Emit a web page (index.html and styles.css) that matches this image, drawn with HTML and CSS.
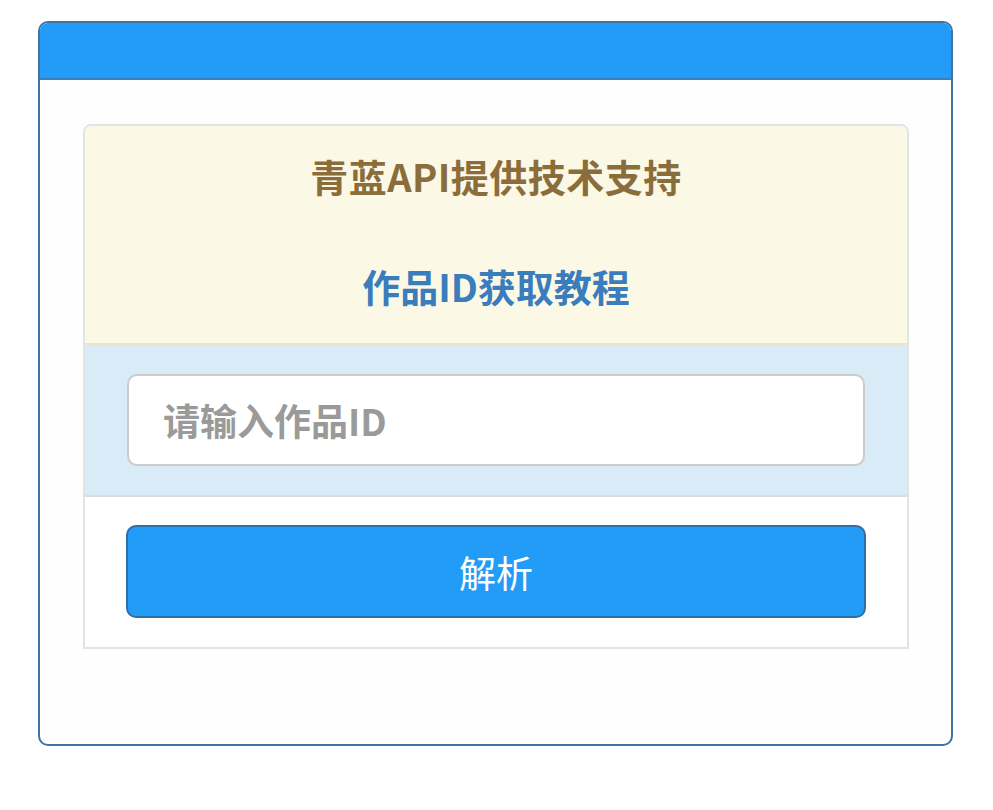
FILE: index.html
```html
<!DOCTYPE html>
<html lang="zh-CN">
<head>
<meta charset="utf-8">
<title>作品ID解析</title>
<link rel="stylesheet" href="styles.css">
</head>
<body>
<div class="card">
  <div class="card-head"></div>
  <div class="card-body">
    <div class="panel">
      <div class="notice">
        <div class="notice-title">青蓝API提供技术支持</div>
        <a class="notice-link" href="#">作品ID获取教程</a>
      </div>
      <div class="input-row">
        <input class="id-input" type="text" placeholder="请输入作品ID">
      </div>
      <div class="btn-row">
        <button class="parse-btn" type="button">解析</button>
      </div>
    </div>
  </div>
</div>
</body>
</html>
```
FILE: styles.css
```css
* { box-sizing: border-box; }
html, body { margin: 0; padding: 0; background: #ffffff; }
body {
  font-family: "Noto Sans CJK SC", "Noto Sans", sans-serif;
  padding: 21px 0 0 38px;
}
.card {
  width: 915px;
  height: 725px;
  border: 2px solid #3f73a3;
  border-radius: 10px;
  background: #fefefe;
  overflow: hidden;
  display: flex;
  flex-direction: column;
}
.card-head {
  height: 57px;
  background: #239cf8;
  border-bottom: 2px solid #3a80c0;
  flex: none;
}
.card-body {
  padding: 44px 42px 0 43px;
}
.panel {
  border: 2px solid #e3e3e3;
  border-radius: 8px 8px 0 0;
  overflow: hidden;
  display: flex;
  flex-direction: column;
}
.notice {
  background: #fcf8e6;
  height: 219px;
  border-bottom: 2px solid #ebe4cd;
  display: flex;
  flex-direction: column;
  align-items: center;
  padding-top: 24px;
}
.notice-title {
  font-size: 38px;
  font-weight: 700;
  color: #8a6d3b;
  line-height: 52px;
  letter-spacing: 0.5px;
}
.notice-link {
  margin-top: 58px;
  font-size: 38px;
  font-weight: 700;
  color: #3a7dbd;
  line-height: 52px;
  text-decoration: none;
}
.input-row {
  background: #d9ebf6;
  height: 152px;
  border-bottom: 2px solid #dcdcdc;
  padding: 29px 42px 0 42px;
}
.id-input {
  display: block;
  width: 100%;
  height: 92px;
  border: 2px solid #cccccc;
  border-radius: 10px;
  background: #ffffff;
  padding: 0 34px;
  font-family: "Noto Sans CJK SC", "Noto Sans", sans-serif;
  font-size: 37px;
  font-weight: 700;
  color: #555;
  outline: none;
}
.id-input::placeholder { color: #9a9a9a; }
.btn-row {
  background: #ffffff;
  height: 150px;
  padding: 28px 41px 0 41px;
}
.parse-btn {
  display: block;
  width: 100%;
  height: 93px;
  border: 2px solid #2f6fa8;
  border-radius: 10px;
  background: #239cf8;
  color: #ffffff;
  font-family: "Noto Sans CJK SC", "Noto Sans", sans-serif;
  font-size: 37px;
  font-weight: 400;
  padding: 0;
}
```
